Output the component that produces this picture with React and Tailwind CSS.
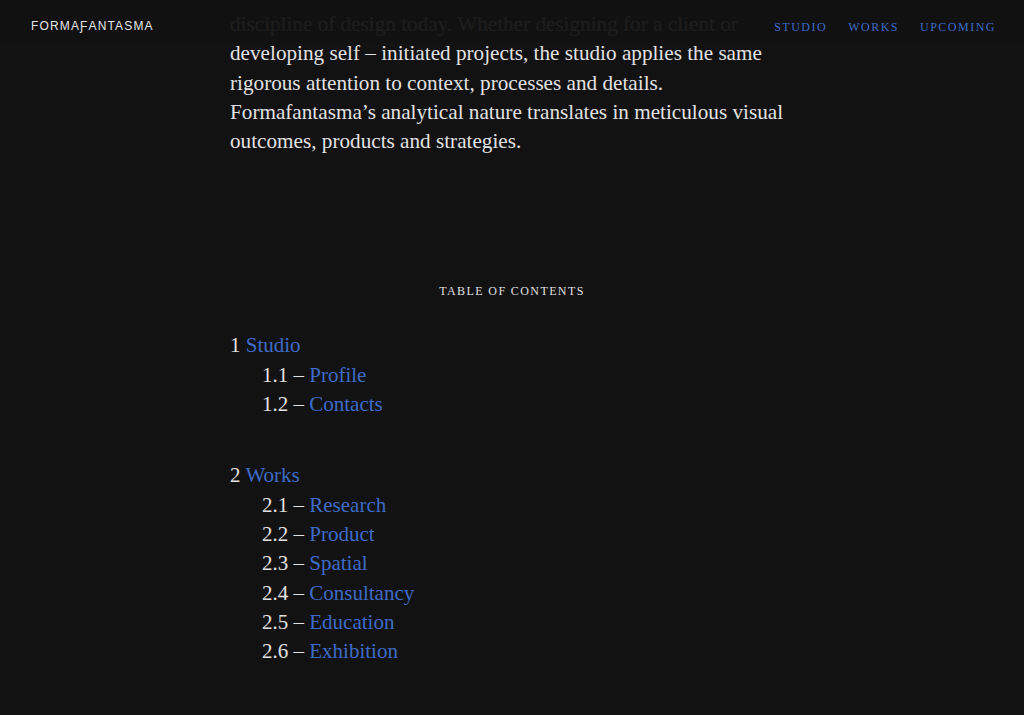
const serif = { fontFamily: '"Liberation Serif", "Times New Roman", serif' }

const groups = [
  {
    num: '1',
    title: 'Studio',
    items: [
      ['1.1', 'Profile'],
      ['1.2', 'Contacts'],
    ],
  },
  {
    num: '2',
    title: 'Works',
    items: [
      ['2.1', 'Research'],
      ['2.2', 'Product'],
      ['2.3', 'Spatial'],
      ['2.4', 'Consultancy'],
      ['2.5', 'Education'],
      ['2.6', 'Exhibition'],
    ],
  },
]

function Header() {
  return (
    <header className="absolute inset-x-0 top-0 h-[42px] bg-[#121212]/95 flex items-start justify-between pl-[31px] pr-[28px]">
      <a
        href="#"
        className="pt-[20px] text-[12px] tracking-[1.15px] text-[#e6e6e6] leading-none"
        style={{ fontFamily: '"Liberation Sans", Arial, sans-serif' }}
      >
        FORMAƑANTASMA
      </a>
      <nav className="flex gap-[21px] pt-[21px] text-[12px] tracking-[1.5px] text-[#3e6bc6] leading-none" style={serif}>
        <a href="#">STUDIO</a>
        <a href="#">WORKS</a>
        <a href="#">UPCOMING</a>
      </nav>
    </header>
  )
}

export default function App() {
  return (
    <div className="relative min-h-screen bg-[#121212] text-[#e2e2e2]" style={serif}>
      <main className="mx-auto w-[564px] pt-[10px] pb-20">
        <p className="text-[21.2px] leading-[29.3px]">
          discipline of design today. Whether designing for a client or developing self – initiated projects, the studio
          applies the same rigorous attention to context, processes and details. Formafantasma’s analytical nature
          translates in meticulous visual outcomes, products and strategies.
        </p>

        <h2 className="mt-[127px] text-center text-[12px] leading-[16px] tracking-[1.4px] text-[#e0e0e0]">
          TABLE OF CONTENTS
        </h2>

        <div className="mt-[32px] flex flex-col gap-[42px]">
          {groups.map((g) => (
            <ul key={g.num} className="text-[21px] leading-[29.3px]">
              <li>
                {g.num} <a href="#" className="text-[#3e6bc6]">{g.title}</a>
              </li>
              {g.items.map(([n, label]) => (
                <li key={n} className="pl-[32px]">
                  {n} – <a href="#" className="text-[#3e6bc6]">{label}</a>
                </li>
              ))}
            </ul>
          ))}
        </div>
      </main>
      <Header />
    </div>
  )
}
